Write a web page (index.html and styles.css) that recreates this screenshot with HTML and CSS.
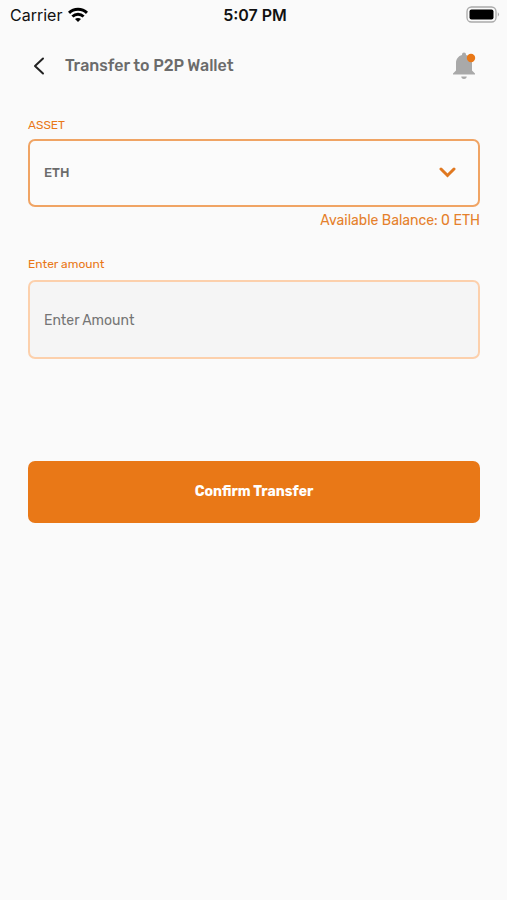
FILE: index.html
```html
<!DOCTYPE html>
<html lang="en">
<head>
<meta charset="utf-8">
<meta name="viewport" content="width=device-width, initial-scale=1">
<title>Transfer to P2P Wallet</title>
<link rel="stylesheet" href="styles.css">
</head>
<body>
<div class="status">
  <div class="status-left">
    <span>Carrier</span>
    <svg width="20" height="16" viewBox="0 0 20 16" fill="none" stroke="#000" stroke-width="3" aria-hidden="true">
      <path d="M1 5.8C6 1 14 1 19 5.8"/>
      <path d="M4.4 9.5C7.6 6.6 12.4 6.6 15.6 9.5"/>
      <path d="M10 15L7 12.1C8.6 10.7 11.4 10.7 13 12.1Z" fill="#000" stroke="none"/>
    </svg>
  </div>
  <span class="time">5:07 PM</span>
  <div class="status-right">
    <svg width="34" height="18" viewBox="0 0 34 18" aria-hidden="true">
      <rect x="1" y="1" width="29" height="15" rx="4.5" fill="none" stroke="#aaa" stroke-width="1.3"/>
      <rect x="3.500" y="3.500" width="24" height="10" rx="2"/>
      <path d="M31.8 6.3Q34.2 8.5 31.8 10.7Z" fill="#aaa"/>
    </svg>
  </div>
</div>
<header class="header">
  <button class="icon-button" type="button" aria-label="Back">
    <svg width="12" height="20" viewBox="0 0 12 20" fill="none" stroke="#222" stroke-width="2" stroke-linecap="round" stroke-linejoin="round"><path d="M10 2.500L2 10L10 17.500"/></svg>
  </button>
  <h1 class="title">Transfer to P2P Wallet</h1>
  <button class="icon-button bell" type="button" aria-label="Notifications">
    <svg width="24" height="28" viewBox="0 0 24 28">
      <path fill="#a9a9a9" d="M10 3V2.500a2 2 0 0 1 4 0V3C17.700 4 20 7 20 11V18.500L23 21.500V22.500H1V21.500L4 18.500V11C4 7 6.300 4 10 3ZM9.300 24.500H14.700A2.700 2.500 0 0 1 9.300 24.500Z"/>
      <circle cx="19" cy="6" r="4.200" fill="#e97817"/>
    </svg>
  </button>
</header>
<main>
  <form class="form">
    <label class="label" for="asset">ASSET</label>
    <div class="select">
      <select class="field" id="asset"><option>ETH</option></select>
      <svg class="chevron" width="18" height="12" viewBox="0 0 18 12" fill="none" stroke="#e07820" stroke-width="3" aria-hidden="true"><path d="M3 2L9.500 8.500L16 2" stroke-linecap="round"/></svg>
    </div>
    <p class="balance">Available Balance: 0 ETH</p>
    <label class="label" for="amount">Enter amount</label>
    <input class="field amount" id="amount" type="text" inputmode="decimal" placeholder="Enter Amount">
    <button class="confirm" type="button">Confirm Transfer</button>
  </form>
</main>
</body>
</html>
```

FILE: styles.css
```css
* {
  box-sizing: border-box;
}

body {
  margin: 0;
  background: #fafafa;
  color: #6b6b6b;
  font-family: Rubik, Roboto, "Liberation Sans", sans-serif;
}

.status {
  display: grid;
  grid-template-columns: 1fr auto 1fr;
  align-items: center;
  height: 30px;
  padding: 0 7px 0 10px;
  color: #111;
  font: 16px/20px Inter, sans-serif;
}

.status-left {
  display: flex;
  align-items: center;
  gap: 6px;
}

.status-right {
  display: flex;
  justify-content: flex-end;
}

.time {
  font-weight: 600;
}

.header {
  display: flex;
  align-items: center;
  height: 72px;
  padding: 0 31px 0 33px;
}

.icon-button {
  display: flex;
  padding: 0;
  border: 0;
  background: none;
}

.bell {
  margin-left: auto;
}

.title {
  margin: 0 0 0 20px;
  font-size: 16px;
  line-height: 20px;
  font-weight: 500;
}

.form {
  display: flex;
  flex-direction: column;
  padding: 15px 27px 28px 28px;
}

.label {
  font-size: 12px;
  line-height: 16px;
  color: #e97817;
}

.select {
  position: relative;
  margin-top: 6px;
}

.field {
  display: block;
  width: 100%;
  padding: 23px 14px;
  border: 2px solid #f0a464;
  border-radius: 7px;
  outline: 0;
  background: #fbfbfb;
  color: #6b6b6b;
  font: 500 13px/18px Rubik, Roboto, sans-serif;
  appearance: none;
}

.chevron {
  position: absolute;
  top: 50%;
  right: 24px;
  transform: translateY(-50%);
  pointer-events: none;
}

.balance {
  margin: 4px 0 25px;
  font-size: 14px;
  line-height: 20px;
  text-align: right;
  color: #e5802b;
}

.amount {
  margin-top: 8px;
  padding: 30px 14px 27px;
  border-color: #fcd0ac;
  background: #f5f5f5;
  font-size: 14px;
  font-weight: 400;
}

.amount::placeholder {
  color: #757575;
  opacity: 1;
}

.confirm {
  margin-top: 102px;
  padding: 21px;
  border: 0;
  border-radius: 7px;
  background: #e97817;
  color: #fff;
  font: 700 14px/20px Rubik, Roboto, sans-serif;
}
```
